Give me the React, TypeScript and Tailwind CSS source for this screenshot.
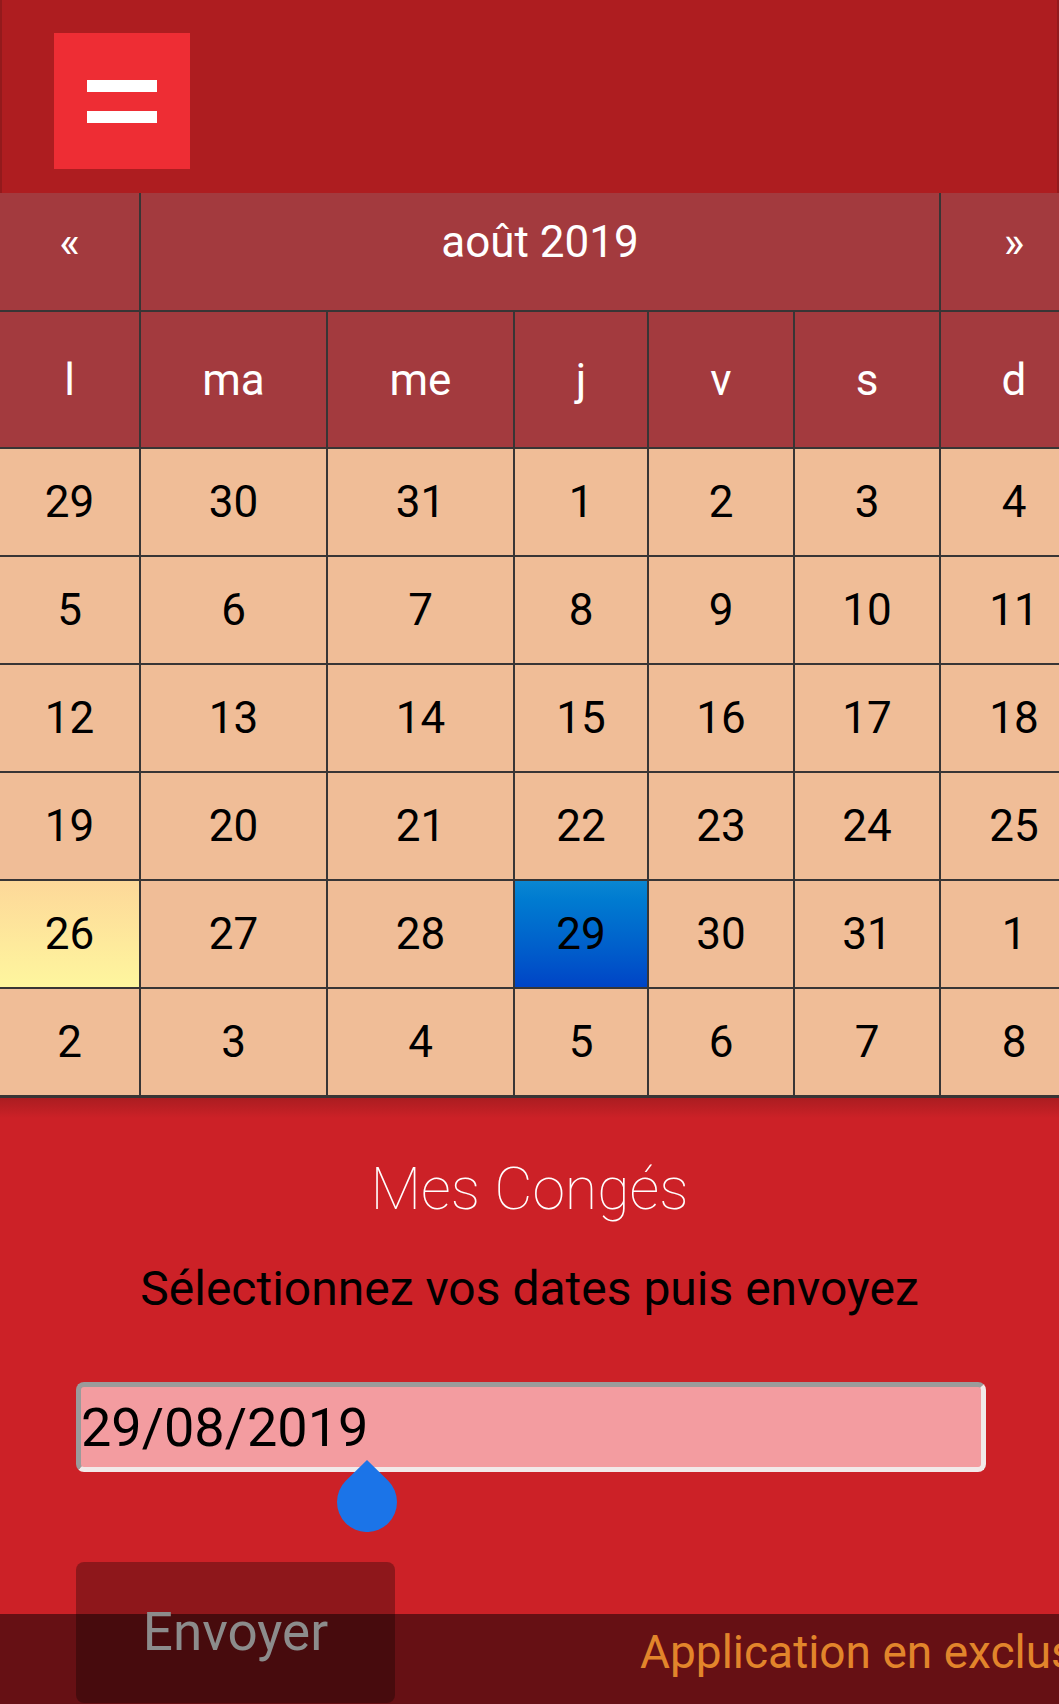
import React from "react";

const COLS = [141, 187, 187, 134, 146, 146, 150];
const DAYS = ["l", "ma", "me", "j", "v", "s", "d"];
const WEEKS = [
  [29, 30, 31, 1, 2, 3, 4],
  [5, 6, 7, 8, 9, 10, 11],
  [12, 13, 14, 15, 16, 17, 18],
  [19, 20, 21, 22, 23, 24, 25],
  [26, 27, 28, 29, 30, 31, 1],
  [2, 3, 4, 5, 6, 7, 8],
];

const font = { fontFamily: "Roboto, 'Noto Sans', sans-serif" };

function dayCellClass(w: number, d: number) {
  if (w === 4 && d === 0) return "bg-gradient-to-b from-[#fdd899] to-[#fef69e]";
  if (w === 4 && d === 3) return "bg-gradient-to-b from-[#0a86d2] to-[#0044c6]";
  return "bg-[#f0bd97]";
}

export default function App() {
  return (
    <div
      className="relative w-[1059px] h-[1704px] overflow-hidden bg-[#cc2127]"
      style={font}
    >
      {/* Header */}
      <div className="h-[193px] bg-[#ae1d20] border-x-2 border-[#931a1c] pl-[52px] pt-[33px]">
        <button
          type="button"
          aria-label="Menu"
          className="w-[136px] h-[136px] bg-[#ee2d34] flex flex-col items-center justify-center gap-[19px]"
        >
          <span className="block w-[70px] h-[12px] bg-white" />
          <span className="block w-[70px] h-[12px] bg-white" />
        </button>
      </div>

      {/* Calendar */}
      <div className="w-[1091px] text-[44px]">
        <div className="flex h-[119px] bg-[#a33a3e] text-white border-b-2 border-[#383535]">
          <div className="w-[141px] flex items-center justify-center pb-[20px] border-r-2 border-[#383535]">
            «
          </div>
          <div className="w-[800px] flex items-center justify-center pb-[20px] border-r-2 border-[#383535]">
            août 2019
          </div>
          <div className="w-[150px] flex items-center justify-center pb-[20px] pr-[4px]">»</div>
        </div>

        <div className="flex h-[137px] bg-[#a33a3e] text-white border-b-2 border-[#383535]">
          {DAYS.map((d, i) => (
            <div
              key={d}
              style={{ width: COLS[i] }}
              className={
                "flex items-center justify-center " +
                (i < 6 ? "border-r-2 border-[#383535]" : "pr-[4px]")
              }
            >
              {d}
            </div>
          ))}
        </div>

        {WEEKS.map((week, w) => (
          <div
            key={w}
            className={
              "flex text-black border-b-2 border-[#383535] " +
              (w === 5 ? "h-[109px] border-b-[3px]" : "h-[108px]")
            }
          >
            {week.map((n, d) => (
              <div
                key={d}
                style={{ width: COLS[d] }}
                className={
                  "flex items-center justify-center " +
                  dayCellClass(w, d) +
                  (d < 6 ? " border-r-2 border-[#383535]" : " pr-[4px]")
                }
              >
                {n}
              </div>
            ))}
          </div>
        ))}
      </div>

      {/* Form section */}
      <div className="h-[20px] bg-gradient-to-b from-[#ab1d21] to-[#cc2127]" />
      <div className="flex flex-col items-center">
        <h1 className="mt-[36px] text-[59px] leading-[70px] font-thin text-white">
          Mes Congés
        </h1>
        <p className="mt-[35px] text-[48px] leading-[60px] text-black">
          Sélectionnez vos dates puis envoyez
        </p>
      </div>

      <div className="pl-[76px] mt-[63px]">
        <input
          readOnly
          value="29/08/2019"
          className="w-[910px] h-[90px] rounded-[8px] border-[5px] border-t-[#9b9b9b] border-l-[#9b9b9b] border-b-[#f2e9e9] border-r-[#f2e9e9] bg-[#f39ca0] pl-0 text-[54px] text-black outline-none"
          style={font}
        />
      </div>

      <div className="pl-[76px] mt-[90px] relative z-20">
        <button
          type="button"
          className="w-[319px] h-[141px] rounded-[8px] bg-black/30 text-[53px] text-[#8c8c8c]"
          style={font}
        >
          Envoyer
        </button>
      </div>

      {/* Selection handle */}
      <svg
        className="absolute left-[337px] top-[1460px] z-10"
        width="60"
        height="72"
        viewBox="0 0 60 72"
      >
        <path d="M30 0 L51.2 20.8 A30 30 0 1 1 8.8 20.8 Z" fill="#1b74e8" />
      </svg>

      {/* Footer */}
      <div className="absolute left-0 right-0 bottom-0 h-[90px] bg-[#661014] z-10 overflow-hidden">
        <div className="pl-[640px] leading-[76px] text-[46px] text-[#e2852b] whitespace-nowrap">
          Application en exclusivité pour les salariés
        </div>
      </div>
    </div>
  );
}
